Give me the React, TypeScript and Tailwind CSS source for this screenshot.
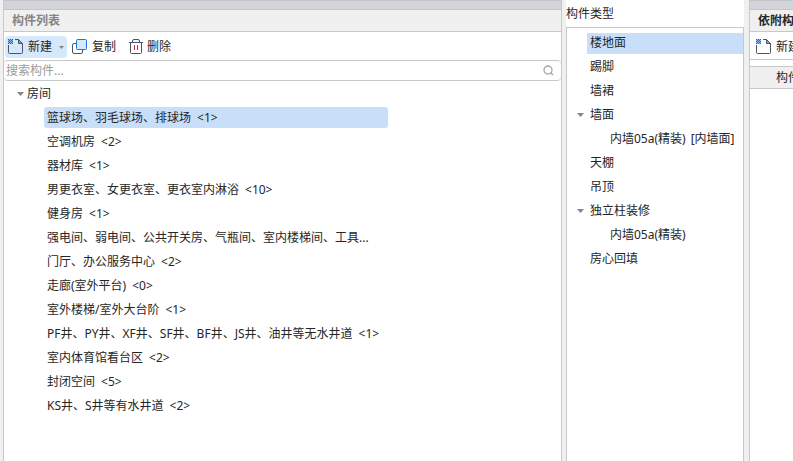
import clsx from 'clsx';

const rooms = [
  { name: '篮球场、羽毛球场、排球场', count: 1 },
  { name: '空调机房', count: 2 },
  { name: '器材库', count: 1 },
  { name: '男更衣室、女更衣室、更衣室内淋浴', count: 10 },
  { name: '健身房', count: 1 },
  { name: '强电间、弱电间、公共开关房、气瓶间、室内楼梯间、工具...' },
  { name: '门厅、办公服务中心', count: 2 },
  { name: '走廊(室外平台)', count: 0 },
  { name: '室外楼梯/室外大台阶', count: 1 },
  { name: 'PF井、PY井、XF井、SF井、BF井、JS井、油井等无水井道', count: 1 },
  { name: '室内体育馆看台区', count: 2 },
  { name: '封闭空间', count: 5 },
  { name: 'KS井、S井等有水井道', count: 2 },
];

const types = [
  { name: '楼地面', selected: true },
  { name: '踢脚' },
  { name: '墙裙' },
  { name: '墙面', children: [{ name: '内墙05a(精装)', tag: '[内墙面]' }] },
  { name: '天棚' },
  { name: '吊顶' },
  { name: '独立柱装修', children: [{ name: '内墙05a(精装)', tag: '' }] },
  { name: '房心回填' },
];

function Caret({ className }: { className?: string }) {
  return (
    <svg className={clsx('shrink-0', className)} width="7" height="4" viewBox="0 0 7 4" fill="#858585">
      <path d="M0 0h7L3.5 4z" />
    </svg>
  );
}

function NewIcon() {
  return (
    <svg className="shrink-0" width="16" height="16" viewBox="0 0 16 16" fill="none">
      <path d="M7 .5h3.5l4 4v9a1 1 0 0 1-1 1h-12a1 1 0 0 1-1-1V6" stroke="#4b5368" />
      <path d="M10.5.5v4h4z" fill="#9aa0ad" stroke="#4b5368" />
      <path d="M0 0h5v5H0z" fill="#8fc0f3" />
      <path
        d="M0 0h1v1H0zM2 0h1v1H2zM4 0h1v1H4zM1 1h1v1H1zM3 1h1v1H3zM0 2h1v1H0zM2 2h1v1H2zM4 2h1v1H4zM1 3h1v1H1zM3 3h1v1H3zM0 4h1v1H0zM2 4h1v1H2zM4 4h1v1H4z"
        fill="#1268cf"
      />
    </svg>
  );
}

function CopyIcon() {
  return (
    <svg className="shrink-0" width="16" height="16" viewBox="0 0 16 16" fill="none">
      <path d="M4 4.5H2A1.5 1.5 0 0 0 .5 6v7A1.5 1.5 0 0 0 2 14.5h7a1.5 1.5 0 0 0 1.5-1.5v-2" stroke="#4b5368" />
      <rect x="4.5" y="0.5" width="10" height="10" rx="1" fill="#d5e8fc" stroke="#1677e0" />
    </svg>
  );
}

function DeleteIcon() {
  return (
    <svg className="shrink-0" width="14" height="16" viewBox="0 0 14 16" fill="none">
      <path d="M0 3.5h14M3.5 3.5V2A1.5 1.5 0 0 1 5 .5h4A1.5 1.5 0 0 1 10.5 2v1.5" stroke="#4b5368" />
      <path d="M1.5 3.5v10a1 1 0 0 0 1 1h9a1 1 0 0 0 1-1v-10" stroke="#4b5368" />
      <path d="M5.5 6v5M8.5 6v5" stroke="#d9222f" />
    </svg>
  );
}

function PanelHeader({ title, className }: { title: string; className?: string }) {
  return (
    <header>
      <div className="h-[10px] border-y border-[#c4c5ca] bg-[#d4d5da]" />
      <h2 className={clsx('flex h-[22px] items-center border-b border-[#c8c8c8] bg-[#f0f0f0] px-2 font-bold', className)}>
        {title}
      </h2>
    </header>
  );
}

function ComponentList() {
  return (
    <section className="flex min-w-0 flex-1 flex-col border-x border-[#c8c8c8] bg-white">
      <PanelHeader title="构件列表" className="text-[#858585]" />
      <div className="flex h-7 items-end gap-1 px-px pb-0.5">
        <button type="button" className="flex h-[22px] items-center rounded-sm bg-[#d5e8fc] px-[3px]">
          <NewIcon />
          <span className="ml-1">新建</span>
          <Caret className="ml-[7px] h-[3px] w-[5px]" />
        </button>
        <button type="button" className="flex h-[22px] items-center gap-1 px-px">
          <CopyIcon />
          复制
        </button>
        <button type="button" className="ml-1 flex h-[22px] items-center gap-1 px-1">
          <DeleteIcon />
          删除
        </button>
      </div>
      <label className="flex h-[21px] items-center rounded-sm border-y border-[#c8c8c8] pr-[7px] pl-0.5">
        <input
          type="search"
          aria-label="搜索构件"
          placeholder="搜索构件..."
          className="min-w-0 flex-1 outline-none placeholder:text-[#9b9b9b]"
        />
        <svg width="11" height="11" viewBox="0 0 11 11" fill="none" stroke="#a8a8a8">
          <circle cx="5" cy="5" r="4" strokeWidth="1.3" />
          <path d="M7.5 7.5l2.5 2.5" strokeWidth="1.5" />
        </svg>
      </label>
      <ul role="tree" aria-label="构件列表" className="pt-px">
        <li role="treeitem" aria-expanded="true">
          <div className="flex h-6 items-center gap-[3px] pl-[13px]">
            <Caret />
            房间
          </div>
          <ul role="group" className="w-[384px] pl-10">
            {rooms.map((room, i) => (
              <li key={room.name} role="treeitem" aria-selected={i === 0} className="py-px pb-0.5">
                <div
                  className={clsx(
                    'flex h-[21px] items-center gap-1.5 rounded-[3px] pl-[3px] leading-[22px] whitespace-nowrap',
                    i === 0 && 'bg-[#c9dff9]',
                  )}
                >
                  <span>{room.name}</span>
                  {room.count !== undefined && <span>{`<${room.count}>`}</span>}
                </div>
              </li>
            ))}
          </ul>
        </li>
      </ul>
    </section>
  );
}

function ComponentTypes() {
  return (
    <section className="flex w-[178px] flex-col bg-white">
      <h2 className="flex h-[27px] items-center">构件类型</h2>
      <ul role="tree" aria-label="构件类型" className="flex-1 border border-b-0 border-[#c8c8c8] pt-[3px]">
        {types.map((type) => (
          <li key={type.name} role="treeitem" aria-selected={!!type.selected}>
            <div className="flex h-6 items-center">
              <span className="w-5 pl-[10px]">{type.children && <Caret />}</span>
              <span className={clsx('h-[21px] flex-1 pl-[3px] leading-5', type.selected && 'bg-[#c9dff9]')}>
                {type.name}
              </span>
            </div>
            {type.children && (
              <ul role="group">
                {type.children.map((child) => (
                  <li
                    key={child.name}
                    role="treeitem"
                    className="flex h-6 items-center gap-[5px] pl-[43px] whitespace-nowrap"
                  >
                    <span>{child.name}</span>
                    {child.tag && <span>{child.tag}</span>}
                  </li>
                ))}
              </ul>
            )}
          </li>
        ))}
      </ul>
    </section>
  );
}

function AttachedComponents() {
  return (
    <section className="w-11 overflow-hidden border-l border-[#c8c8c8] bg-white whitespace-nowrap">
      <PanelHeader title="依附构件类型" />
      <div className="flex h-7 items-end border-b border-[#c8c8c8] pb-px pl-1.5">
        <button type="button" className="flex h-[22px] shrink-0 items-center gap-1">
          <NewIcon />
          新建
        </button>
      </div>
      <table className="mt-1.5 w-full">
        <thead>
          <tr className="h-[22px] border-y border-[#c8c8c8] bg-[#f0f0f0]">
            <th scope="col" className="pl-[26px] text-left font-normal">
              构件
            </th>
          </tr>
        </thead>
      </table>
    </section>
  );
}

export default function App() {
  return (
    <main className="flex h-screen overflow-hidden bg-[#f0f0f0] pl-[3px] font-['Noto_Sans','Noto_Sans_CJK_SC',sans-serif] text-xs text-[#262626]">
      <ComponentList />
      <div className="w-1 shrink-0" />
      <ComponentTypes />
      <div className="w-[5px] shrink-0" />
      <AttachedComponents />
    </main>
  );
}
